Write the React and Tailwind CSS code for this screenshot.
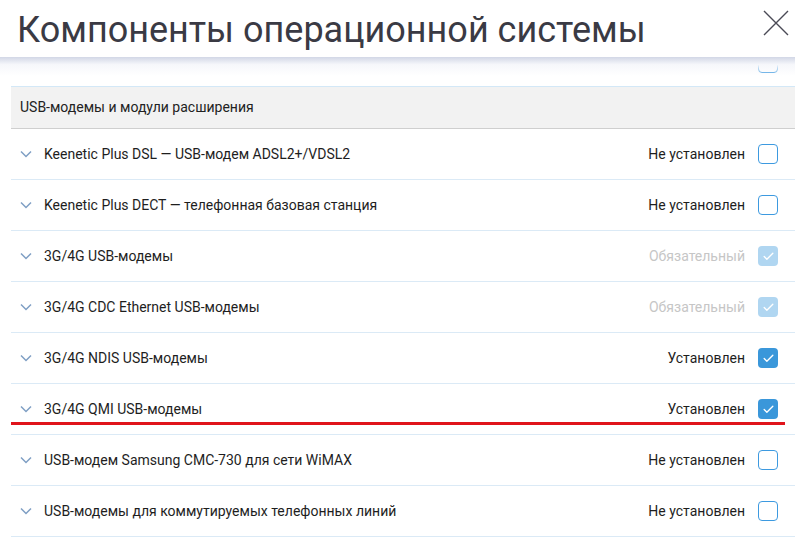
import { Check } from "lucide-react";

const rows = [
  { label: "Keenetic Plus DSL — USB-модем ADSL2+/VDSL2", state: "off" },
  { label: "Keenetic Plus DECT — телефонная базовая станция", state: "off" },
  { label: "3G/4G USB-модемы", state: "required" },
  { label: "3G/4G CDC Ethernet USB-модемы", state: "required" },
  { label: "3G/4G NDIS USB-модемы", state: "on" },
  { label: "3G/4G QMI USB-модемы", state: "on", marked: true },
  { label: "USB-модем Samsung CMC-730 для сети WiMAX", state: "off" },
  { label: "USB-модемы для коммутируемых телефонных линий", state: "off" },
];

const statusText = {
  off: "Не установлен",
  on: "Установлен",
  required: "Обязательный",
};

function Box({ state }) {
  if (state === "off") {
    return <div className="h-5 w-5 rounded-[4px] border border-[#3d9ae0] bg-white" />;
  }
  return (
    <div
      className={`flex h-5 w-5 items-center justify-center rounded-[4px] ${
        state === "on" ? "bg-[#3a97da]" : "bg-[#b0d6f1]"
      }`}
    >
      <Check size={13} strokeWidth={2.5} className="text-white" />
    </div>
  );
}

function Chevron() {
  return (
    <svg width="12" height="8" viewBox="0 0 12 8" className="shrink-0">
      <path d="M1 1.5L6 6.5L11 1.5" stroke="#7f9fc4" strokeWidth="1.5" fill="none" />
    </svg>
  );
}

function Row({ row }) {
  return (
    <div className="relative flex h-[51px] items-center border-b border-[#dbeaf6] pl-[9px] pr-[17px]">
      <Chevron />
      <span className="ml-[12px] flex-1 text-[14px] text-[#1e1e1e]">{row.label}</span>
      <span
        className={`mr-[13px] text-[14px] ${
          row.state === "required" ? "text-[#c6c6c6]" : "text-[#1e1e1e]"
        }`}
      >
        {statusText[row.state]}
      </span>
      <Box state={row.state} />
      {row.marked && (
        <div className="absolute bottom-[9px] left-0 right-[10px] h-[3px] bg-[#e0141b]" />
      )}
    </div>
  );
}

export default function App() {
  return (
    <div className="flex h-[537px] w-[795px] flex-col overflow-hidden bg-white font-['Roboto',sans-serif]">
      <div className="relative z-10 flex h-[57px] shrink-0 items-start justify-between bg-white pl-[17px] pr-[5px]">
        <h1 className="mt-[8px] text-[36px] leading-[44px] text-[#3a3a44]">
          Компоненты операционной системы
        </h1>
        <svg width="28" height="28" viewBox="0 0 28 28" className="mt-[9px]">
          <path d="M2 2L26 26M26 2L2 26" stroke="#4a4a55" strokeWidth="1.4" fill="none" />
        </svg>
        {/* fade over the scrolled list */}
        <div className="absolute left-0 right-0 top-full h-[19px] bg-[linear-gradient(to_bottom,#d2d7e6_0%,rgba(246,247,251,1)_40%,rgba(255,255,255,0)_100%)]" />
      </div>

      <div className="ml-[11px] -mt-[22px]">
        <div className="flex h-[51px] items-center justify-end pr-[17px] pt-[4px]">
          <span className="mb-[12px] mr-[13px] text-[14px] text-[#1e1e1e]">Не установлен</span>
          <Box state="off" />
        </div>
        <div className="flex h-[43px] items-center border-y border-t-[#d3e8f7] border-b-[#cfcfcf] bg-[#f2f2f2] pl-[9px] text-[14px] text-[#222]">
          USB-модемы и модули расширения
        </div>
        {rows.map((row) => (
          <Row key={row.label} row={row} />
        ))}
      </div>
    </div>
  );
}
